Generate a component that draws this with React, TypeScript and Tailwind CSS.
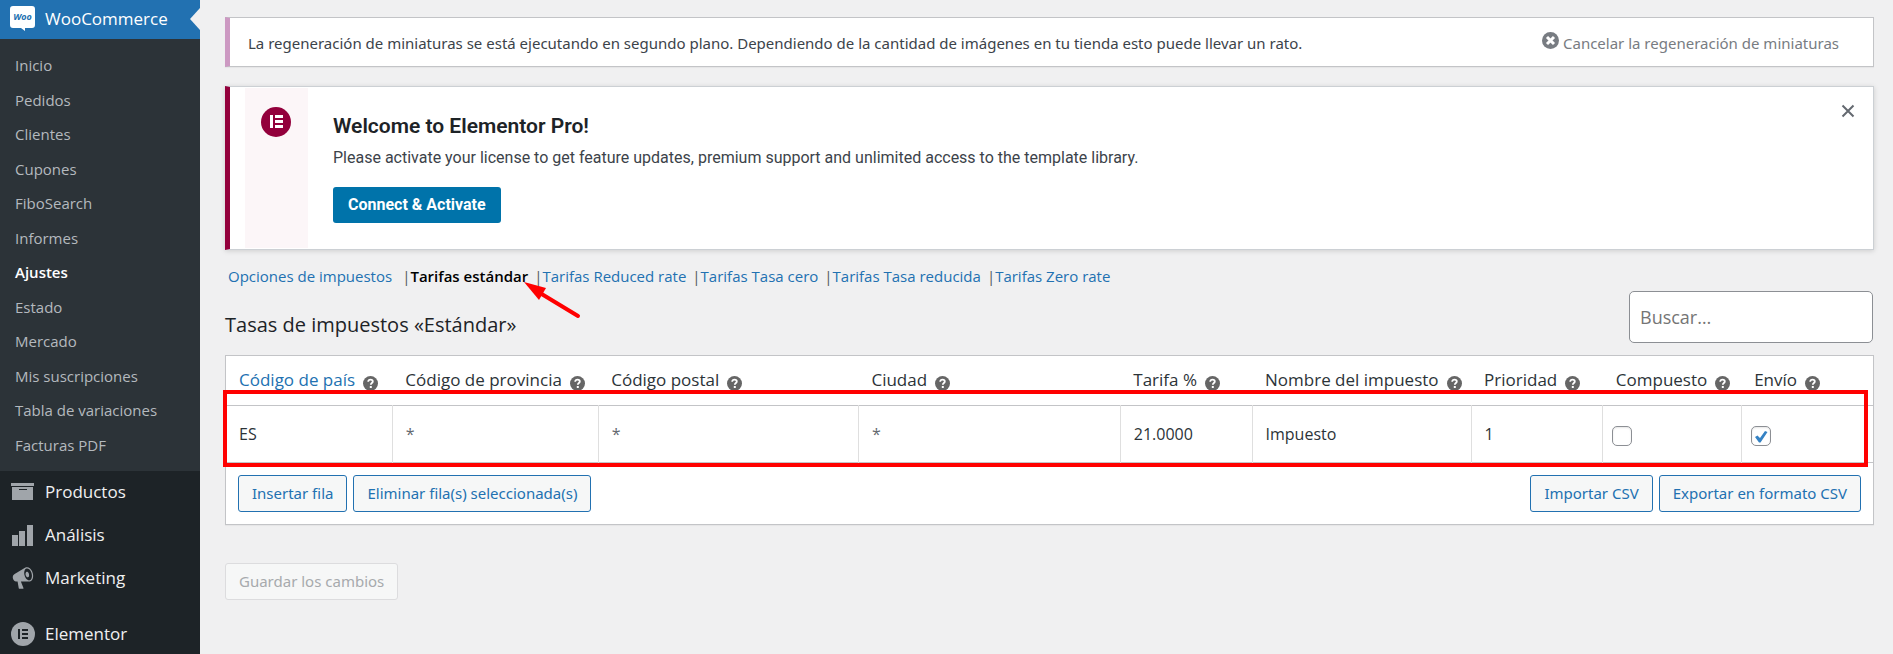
import type { ReactNode } from "react";

const submenu = [
  "Inicio",
  "Pedidos",
  "Clientes",
  "Cupones",
  "FiboSearch",
  "Informes",
  "Ajustes",
  "Estado",
  "Mercado",
  "Mis suscripciones",
  "Tabla de variaciones",
  "Facturas PDF",
];

const sections = [
  "Opciones de impuestos",
  "Tarifas estándar",
  "Tarifas Reduced rate",
  "Tarifas Tasa cero",
  "Tarifas Tasa reducida",
  "Tarifas Zero rate",
];

interface Column {
  label: string;
  width: string;
  value?: string;
  checked?: boolean;
}

const columns: Column[] = [
  { label: "Código de país", width: "w-[10.1%]", value: "ES" },
  { label: "Código de provincia", width: "w-[12.5%]", value: "" },
  { label: "Código postal", width: "w-[15.8%]", value: "" },
  { label: "Ciudad", width: "w-[15.9%]", value: "" },
  { label: "Tarifa %", width: "w-[8%]", value: "21.0000" },
  { label: "Nombre del impuesto", width: "w-[13.3%]", value: "Impuesto" },
  { label: "Prioridad", width: "w-[8%]", value: "1" },
  { label: "Compuesto", width: "w-[8.4%]", checked: false },
  { label: "Envío", width: "w-[8%]", checked: true },
];

function WooIcon() {
  return (
    <svg width="26" height="26" viewBox="0 0 26 26" aria-hidden="true">
      <path
        d="M3 0h19a3 3 0 0 1 3 3v16a3 3 0 0 1-3 3h-7v3l-4-3H3a3 3 0 0 1-3-3V3a3 3 0 0 1 3-3z"
        fill="#fff"
      />
      <text
        x="12.5"
        y="14"
        textAnchor="middle"
        fontSize="9"
        fontWeight="700"
        fontStyle="italic"
        fontFamily="Open Sans, sans-serif"
        fill="#2271b1"
      >
        Woo
      </text>
    </svg>
  );
}

function ArchiveIcon() {
  return (
    <svg width="24" height="24" viewBox="0 0 24 24" fill="#a0a5aa" aria-hidden="true">
      <path d="M0 3h23v3H0z" />
      <path d="M1 7h21v13H1zM8 9v1h8V9z" fillRule="evenodd" />
    </svg>
  );
}

function ChartIcon() {
  return (
    <svg width="24" height="24" viewBox="0 0 24 24" fill="#a0a5aa" aria-hidden="true">
      <path d="M1 12h6v11H1zM8 8h6v15H8zM16 2h6v21h-6z" />
    </svg>
  );
}

function MegaphoneIcon() {
  return (
    <svg width="24" height="24" viewBox="0 0 20 20" fill="#a0a5aa" aria-hidden="true">
      <path d="M18.15 5.94c.46 1.62.38 3.22-.02 4.48-.42 1.28-1.26 2.18-2.3 2.48-.16.06-.26.06-.4.06-.06.02-.12.02-.18.02-.06.02-.14.02-.22.02h-6.8l2.22 5.5c.02.14-.06.26-.14.34-.08.1-.24.16-.34.16H6.95c-.1 0-.26-.06-.34-.16-.08-.08-.16-.2-.14-.34l-1-5.5H4.25l-.02-.02c-.5.06-1.08-.18-1.54-.62s-.88-1.08-1.06-1.88c-.24-.8-.2-1.56-.02-2.2.18-.62.58-1.08 1.06-1.3l.02-.02 9-5.4c.1-.06.18-.1.24-.16.06-.04.14-.08.24-.12.16-.08.28-.12.5-.18 1.04-.3 2.24.1 3.22.98s1.84 2.24 2.26 3.86zm-2.58 5.98h-.02c.4-.1.74-.34 1.04-.7.58-.7.86-1.76.86-3.04 0-.64-.1-1.3-.28-1.98-.34-1.36-1.02-2.5-1.78-3.24s-1.68-1.1-2.46-.88c-.82.22-1.4.96-1.7 2-.32 1.04-.28 2.36.06 3.72.38 1.36 1 2.5 1.8 3.24.78.74 1.62 1.1 2.48.88zm-2.54-7.08c.22-.04.42-.02.62.04.38.16.76.48 1.02 1s.42 1.2.42 1.78c0 .3-.04.56-.12.8-.18.48-.44.84-.86.94-.34.1-.8-.06-1.14-.4s-.64-.86-.78-1.5c-.18-.62-.12-1.24.02-1.72s.48-.84.82-.94z" />
    </svg>
  );
}

function ElementorIcon() {
  return (
    <svg width="24" height="24" viewBox="0 0 24 24" aria-hidden="true">
      <circle cx="12" cy="12" r="12" fill="#a0a5aa" />
      <path d="M7 7h2v10H7zM11 7h6v2h-6zM11 11h6v2h-6zM11 15h6v2h-6z" fill="#1d2327" />
    </svg>
  );
}

function HelpIcon() {
  return (
    <svg
      width="15"
      height="15"
      viewBox="0 0 15 15"
      className="mt-[6px] ml-2 shrink-0"
      aria-hidden="true"
    >
      <circle cx="7.5" cy="7.5" r="7.5" fill="#666" />
      <path
        d="M5.2 5.8c0-1.4 1-2.2 2.3-2.2s2.3.8 2.3 1.9c0 1.5-2 1.5-2 3.2"
        fill="none"
        stroke="#fff"
        strokeWidth="1.8"
      />
      <path d="M6.8 10h2v2h-2z" fill="#fff" />
    </svg>
  );
}

function MenuItem({ icon, children }: { icon: ReactNode; children: ReactNode }) {
  return (
    <a href="#" className="flex items-center gap-[10px] pl-[11px] text-[17px] text-[#f0f0f1]">
      {icon}
      {children}
    </a>
  );
}

function Sidebar() {
  return (
    <nav aria-label="Menú principal" className="flex w-[200px] shrink-0 flex-col bg-[#1d2327]">
      <a
        href="#"
        className="relative flex h-[39px] items-center gap-[9px] bg-[#2271b1] pb-[2px] pl-[10px] text-[17px] text-white"
      >
        <WooIcon />
        WooCommerce
        <span className="absolute top-2 right-0 border-y-[11px] border-r-[10px] border-y-transparent border-r-[#f0f0f1]" />
      </a>
      <ul className="grid h-[432px] grid-rows-12 bg-[#2c3338] py-[9px]">
        {submenu.map((item) => (
          <li key={item} className="flex items-center">
            <a
              href="#"
              className={
                item === "Ajustes"
                  ? "pl-[15px] font-semibold text-white"
                  : "pl-[15px] text-[#b4b9be]"
              }
            >
              {item}
            </a>
          </li>
        ))}
      </ul>
      <div className="grid h-32 grid-rows-3">
        <MenuItem icon={<ArchiveIcon />}>Productos</MenuItem>
        <MenuItem icon={<ChartIcon />}>Análisis</MenuItem>
        <MenuItem icon={<MegaphoneIcon />}>Marketing</MenuItem>
      </div>
      <div className="mt-4 grid h-[38px]">
        <MenuItem icon={<ElementorIcon />}>Elementor</MenuItem>
      </div>
    </nav>
  );
}

function ThumbnailNotice() {
  return (
    <div className="flex h-[50px] items-center justify-between border border-l-[5px] border-[#c3c4c7] border-l-[#cc99c2] bg-white pt-px pr-[34px] pl-[18px] font-['Noto_Sans',sans-serif] text-[#3c434a] shadow-[0_1px_1px_rgba(0,0,0,0.04)]">
      <p>
        La regeneración de miniaturas se está ejecutando en segundo plano. Dependiendo de la
        cantidad de imágenes en tu tienda esto puede llevar un rato.
      </p>
      <a href="#" className="flex items-center gap-1 text-[#787c82]">
        <svg width="17" height="17" viewBox="0 0 17 17" className="mb-1" aria-hidden="true">
          <circle cx="8.5" cy="8.5" r="8.5" fill="#787c82" />
          <path d="M5 5l7 7M12 5l-7 7" stroke="#fff" strokeWidth="3" />
        </svg>
        Cancelar la regeneración de miniaturas
      </a>
    </div>
  );
}

function ElementorNotice() {
  return (
    <div className="mt-[19px] flex h-[164px] border border-l-[5px] border-[#ccd0d4] border-l-[#93003c] bg-white pl-[15px] font-[Roboto,sans-serif] shadow-[0_1px_5px_rgba(0,0,0,0.15)]">
      <div className="my-px w-[63px] bg-[#fcf6f8] pt-[19px] pl-4">
        <svg width="30" height="30" viewBox="0 0 30 30" aria-hidden="true">
          <circle cx="15" cy="15" r="15" fill="#93003c" />
          <path d="M9 8h3v13H9zM14 8h8v3h-8zM14 13h8v3h-8zM14 18h8v3h-8z" fill="#fff" />
        </svg>
      </div>
      <div className="flex-1 pt-[27px] pl-[25px]">
        <h3 className="text-[21px] leading-6 font-semibold text-[#1d2327]">
          Welcome to Elementor Pro!
        </h3>
        <p className="mt-2 text-base leading-6 text-[#3c434a]">
          Please activate your license to get feature updates, premium support and unlimited
          access to the template library.
        </p>
        <button className="mt-[17px] h-9 rounded-[3px] bg-[#0073aa] px-[15px] text-base font-bold text-white">
          Connect &amp; Activate
        </button>
      </div>
      <button aria-label="Descartar" className="mt-[17px] mr-[18px] self-start">
        <svg width="14" height="14" viewBox="0 0 14 14" aria-hidden="true">
          <path d="M1.5 1.5l11 11M12.5 1.5l-11 11" stroke="#646970" strokeWidth="2" />
        </svg>
      </button>
    </div>
  );
}

function Button({ children }: { children: ReactNode }) {
  return (
    <button className="h-[37px] rounded-[3px] border border-[#2271b1] bg-[#f6f7f7] px-[13px] font-['Noto_Sans',sans-serif] text-[#2271b1]">
      {children}
    </button>
  );
}

function TaxTable() {
  return (
    <div className="relative mt-3 border border-[#c3c4c7] bg-white shadow-[0_1px_1px_rgba(0,0,0,0.04)]">
      <table className="w-full table-fixed border-collapse text-[#2c3338]">
        <thead>
          <tr className="h-[49px] border-b border-[#c3c4c7]">
            {columns.map(({ label, width }, i) => (
              <th key={label} className={`${width} p-0 pl-[13px] text-left text-[17px] font-normal`}>
                <span className="flex items-center whitespace-nowrap">
                  {i === 0 ? (
                    <a href="#" className="text-[#2271b1]">
                      {label}
                    </a>
                  ) : (
                    label
                  )}
                  <HelpIcon />
                </span>
              </th>
            ))}
          </tr>
        </thead>
        <tbody>
          <tr className="h-[57px] border-b border-[#c3c4c7]">
            {columns.map(({ label, value, checked }) => (
              <td key={label} className="border-r border-[#dfdfdf] p-0 last:border-r-0">
                {checked === undefined ? (
                  <input
                    type="text"
                    aria-label={label}
                    defaultValue={value}
                    placeholder="*"
                    className="block w-full bg-transparent pt-px pl-[13px] text-[16px] placeholder:text-[#646970]"
                  />
                ) : (
                  <span className="relative mt-1 ml-[9px] block size-5">
                    <input
                      type="checkbox"
                      aria-label={label}
                      defaultChecked={checked}
                      className="peer block size-5 appearance-none rounded-[5px] border border-[#8c8f94] bg-white shadow-[inset_0_1px_2px_rgba(0,0,0,0.1)]"
                    />
                    <svg
                      viewBox="0 0 20 20"
                      className="pointer-events-none absolute inset-0 hidden peer-checked:block"
                      aria-hidden="true"
                    >
                      <path d="M4 11l2.5-1.500 2.500 2.500L14 5l2.500 1L9.500 16.500H8z" fill="#3582c4" />
                    </svg>
                  </span>
                )}
              </td>
            ))}
          </tr>
        </tbody>
      </table>
      <div className="flex items-center justify-between p-3">
        <div className="flex gap-[6px]">
          <Button>Insertar fila</Button>
          <Button>Eliminar fila(s) seleccionada(s)</Button>
        </div>
        <div className="flex gap-[6px]">
          <Button>Importar CSV</Button>
          <Button>Exportar en formato CSV</Button>
        </div>
      </div>
      <div className="pointer-events-none absolute top-[34px] right-[5px] -left-[3px] h-[77px] border-4 border-[#ff0000]" />
    </div>
  );
}

export default function App() {
  return (
    <div className="flex min-h-screen bg-[#f0f0f1] font-['Open_Sans',sans-serif] text-[15px] leading-5">
      <Sidebar />
      <main className="min-w-0 flex-1 pt-[17px] pr-[19px] pl-[25px]">
        <ThumbnailNotice />
        <ElementorNotice />
        <ul className="mt-4 flex pl-[3px] text-[#50575e]">
          {sections.map((section, i) => (
            <li key={section} className="relative pr-[6px] first:pr-[10px]">
              {i > 0 && <span>|</span>}
              <a
                href="#"
                className={
                  section === "Tarifas estándar" ? "font-semibold text-black" : "text-[#2271b1]"
                }
              >
                {section}
              </a>
              {section === "Tarifas estándar" && (
                <svg
                  width="58"
                  height="38"
                  viewBox="0 0 58 38"
                  className="absolute top-4 left-full -ml-[10px]"
                  aria-hidden="true"
                >
                  <path d="M0 0l22 6-7 12z" fill="#ff0000" />
                  <path d="M16 11l38 23" stroke="#ff0000" strokeWidth="4" strokeLinecap="round" />
                </svg>
              )}
            </li>
          ))}
        </ul>
        <div className="mt-[5px] flex items-end justify-between">
          <h2 className="mb-[6px] text-[20px] leading-6 font-medium text-[#1d2327]">
            Tasas de impuestos «Estándar»
          </h2>
          <input
            type="search"
            aria-label="Buscar"
            placeholder="Buscar…"
            className="mr-px h-[52px] w-[244px] rounded-[5px] border border-[#8c8f94] bg-white px-[10px] text-[18px] placeholder:text-[#757575]"
          />
        </div>
        <TaxTable />
        <button
          disabled
          className="mt-[38px] h-[37px] rounded-[3px] border border-[#dcdcde] bg-[#f6f7f7] px-[13px] font-['Noto_Sans',sans-serif] text-[#a7aaad]"
        >
          Guardar los cambios
        </button>
      </main>
    </div>
  );
}
